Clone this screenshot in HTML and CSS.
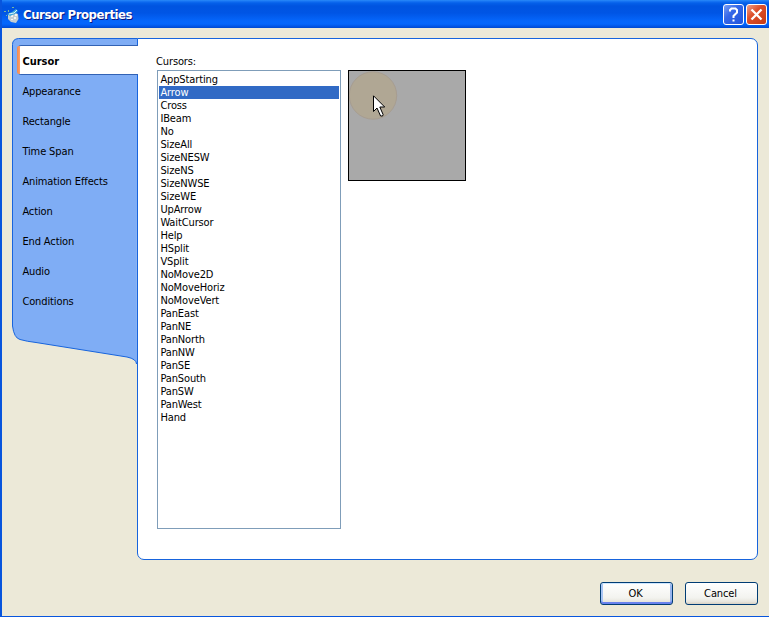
FILE: index.html
```html
<!DOCTYPE html>
<html lang="en">
<head>
<meta charset="utf-8">
<title>Cursor Properties</title>
<link rel="stylesheet" href="styles.css">
</head>
<body>
<div class="dialog">
  <header class="titlebar">
    <svg class="app-icon" width="16" height="16" viewBox="0 0 16 16">
      <path d="M4 8l5-3 5 2 .5 5-2.500 4-5-1-3-3z" fill="#c3cdd2"/>
      <path d="M7 8h2v2H7zM10 10h2v2h-2zM7 12h2v1H7zM11 7h2v2h-2z" fill="#f4f4ee"/>
      <path d="M3 7l5-2 4-3 2 2-3 3-5 2z" fill="#3fa9dc"/>
      <path d="M5 7l5-1 3-3" stroke="#d9f2fa" fill="none"/>
      <path d="M0 4h2v1H0zM4 3h1v2H4zM8 0h2v1H8zM2 8h1v1H2z" fill="#79b69c"/>
    </svg>
    <h1 class="title">Cursor Properties</h1>
    <button class="caption help" aria-label="Help"><svg width="21" height="21" viewBox="0 0 21 21"><path d="M7 7.500V6l1.500-1.500h4L14 6v2.500L10.500 12v2M10.500 15.500v2" fill="none" stroke="#fff" stroke-width="2"/></svg></button>
    <button class="caption close" aria-label="Close"><svg width="21" height="21" viewBox="0 0 21 21"><path d="M5.500 5.500l10 10M15.500 5.500l-10 10" fill="none" stroke="#fff" stroke-width="2.300"/></svg></button>
  </header>
  <main class="content">
    <nav class="tabs">
      <svg class="tabs-shape" width="126" height="328" viewBox="0 0 126 328">
        <path d="M125.500 .5H6.500Q.5 1 .5 6.500V288Q2 300 8 301.500Q15 303.500 24 304.500L115 319Q124.500 321 124.500 326" fill="#7fadf5"/>
        <path d="M124 326H126V0z" fill="#7fadf5"/>
        <path d="M125.500 .5H6.500Q.5 1 .5 6.500V288Q2 300 8 301.500Q15 303.500 24 304.500L115 319Q124.500 321 124.500 326" fill="none" stroke="#1764dd"/>
      </svg>
      <a class="tab active"><span>Cursor</span></a>
      <a class="tab"><span>Appearance</span></a>
      <a class="tab"><span>Rectangle</span></a>
      <a class="tab"><span>Time Span</span></a>
      <a class="tab"><span>Animation Effects</span></a>
      <a class="tab"><span>Action</span></a>
      <a class="tab"><span>End Action</span></a>
      <a class="tab"><span>Audio</span></a>
      <a class="tab"><span>Conditions</span></a>
    </nav>
    <section class="panel">
      <div class="field">
        <div class="label">Cursors:</div>
        <ul class="list">
          <li>AppStarting</li><li class="selected">Arrow</li><li>Cross</li><li>IBeam</li><li>No</li><li>SizeAll</li><li>SizeNESW</li><li>SizeNS</li><li>SizeNWSE</li><li>SizeWE</li><li>UpArrow</li><li>WaitCursor</li><li>Help</li><li>HSplit</li><li>VSplit</li><li>NoMove2D</li><li>NoMoveHoriz</li><li>NoMoveVert</li><li>PanEast</li><li>PanNE</li><li>PanNorth</li><li>PanNW</li><li>PanSE</li><li>PanSouth</li><li>PanSW</li><li>PanWest</li><li>Hand</li>
        </ul>
      </div>
      <div class="preview">
        <svg width="116" height="109" viewBox="0 0 116 109">
          <circle cx="24" cy="24.500" r="23.700" fill="#b0a794" stroke="#a79d91"/>
          <path d="M24.500 24.800v15.700L28 37l3.600 8h2l.5-1.500-3.300-7.500h4.900z" fill="#fff" stroke="#000" stroke-width="1"/>
        </svg>
      </div>
    </section>
  </main>
  <footer class="actions">
    <button class="button default">OK</button>
    <button class="button">Cancel</button>
  </footer>
</div>
</body>
</html>
```
FILE: styles.css
```css
* { box-sizing: border-box; }
body {
  margin: 0;
  font: 11px/13px "DejaVu Sans Condensed", "DejaVu Sans", sans-serif;
  font-stretch: condensed;
  letter-spacing: -0.12px;
  color: #000;
}
.dialog {
  width: 769px;
  height: 617px;
  display: flex;
  flex-direction: column;
  background: #ece9d8;
  border-left: 2px solid #0855dd;
  border-bottom: 1px solid #0855dd;
  overflow: hidden;
}
.titlebar {
  flex: none;
  height: 28px;
  margin-left: -2px;
  padding: 2px 2px 0 4px;
  display: flex;
  align-items: center;
  background: linear-gradient(#2b8cf8 0, #1a78f5 1px, #0560ea 3px, #0054e0 6px, #0055e5 13px, #0566fb 21px, #0466fc 24px, #0050df 27px, #0048cc 28px);
}
.app-icon { margin-right: 3px; }
.title {
  flex: 1;
  margin: 0;
  font: bold 13px/16px "DejaVu Sans Condensed", "DejaVu Sans", sans-serif;
  font-stretch: condensed;
  letter-spacing: -0.43px;
  color: #fff;
  text-shadow: 1px 1px 0 #0a1883;
}
.caption {
  width: 21px;
  height: 21px;
  margin: -2px 0 0 2px;
  padding: 0;
  border: 1px solid #fff;
  border-radius: 3px;
}
.caption svg { display: block; margin: -1px; }
.help { background: linear-gradient(135deg, #7a9ff5, #3567e7 40%, #1f54dd); }
.close { background: linear-gradient(135deg, #eea08a, #dd4f2a 40%, #c43b16); }
.content { display: flex; height: 522px; margin: 10px 11px 0 10px; }
.tabs { position: relative; width: 125px; padding: 7px 0 0 6px; }
.tabs-shape { position: absolute; left: 0; top: 0; z-index: 0; }
.tab { position: relative; display: block; height: 30px; padding: 10px 0 0 4.400px; white-space: nowrap; }
.tab span { display: block; }
.tab.active {
  width: 120px;
  background: #fff;
  border: 1px solid #3262b4;
  border-width: 1px 0;
  border-radius: 3px 0 0 3px;
  padding-top: 9px;
  z-index: 1;
  font-weight: bold;
  letter-spacing: 0;
}
.tab.active::before {
  content: "";
  position: absolute;
  left: -1px;
  top: 0;
  width: 3px;
  height: 28px;
  border-radius: 2px 0 0 2px;
  background: linear-gradient(90deg, #f18a50, #ff9f68);
}
.panel {
  position: relative;
  flex: 1;
  display: flex;
  background: #fff;
  border: 1px solid #1764dd;
  border-radius: 0 7px 7px 7px;
  padding: 16px 0 0 19px;
}
.field { width: 184px; margin-right: 7px; }
.label { height: 15px; margin-left: -1px; }
.list { list-style: none; margin: 0; height: 459px; padding: 2px 1px; border: 1px solid #7f9db9; }
.list li { height: 13px; padding-left: 1.400px; }
.list .selected { background: #316ac5; color: #fff; }
.preview { width: 118px; height: 111px; margin-top: 15px; border: 1px solid #000; background: #a9a9a9; }
.preview svg { display: block; }
.actions { display: flex; justify-content: flex-end; gap: 12px; padding: 22px 11px 0 0; }
.button {
  width: 73px;
  height: 23px;
  padding: 0 2px 0 0;
  font: inherit;
  letter-spacing: inherit;
  color: #000;
  border: 1px solid #003c74;
  border-radius: 3px;
  background: linear-gradient(#fff, #f3f3ef 70%, #e8e6de 88%, #d8d1c4);
}
.button.default { box-shadow: inset 0 1px #cee7ff, inset 0 -2px #6982ee, inset 2px 0 #a9c5f4, inset -2px 0 #98b5ed; }
```
